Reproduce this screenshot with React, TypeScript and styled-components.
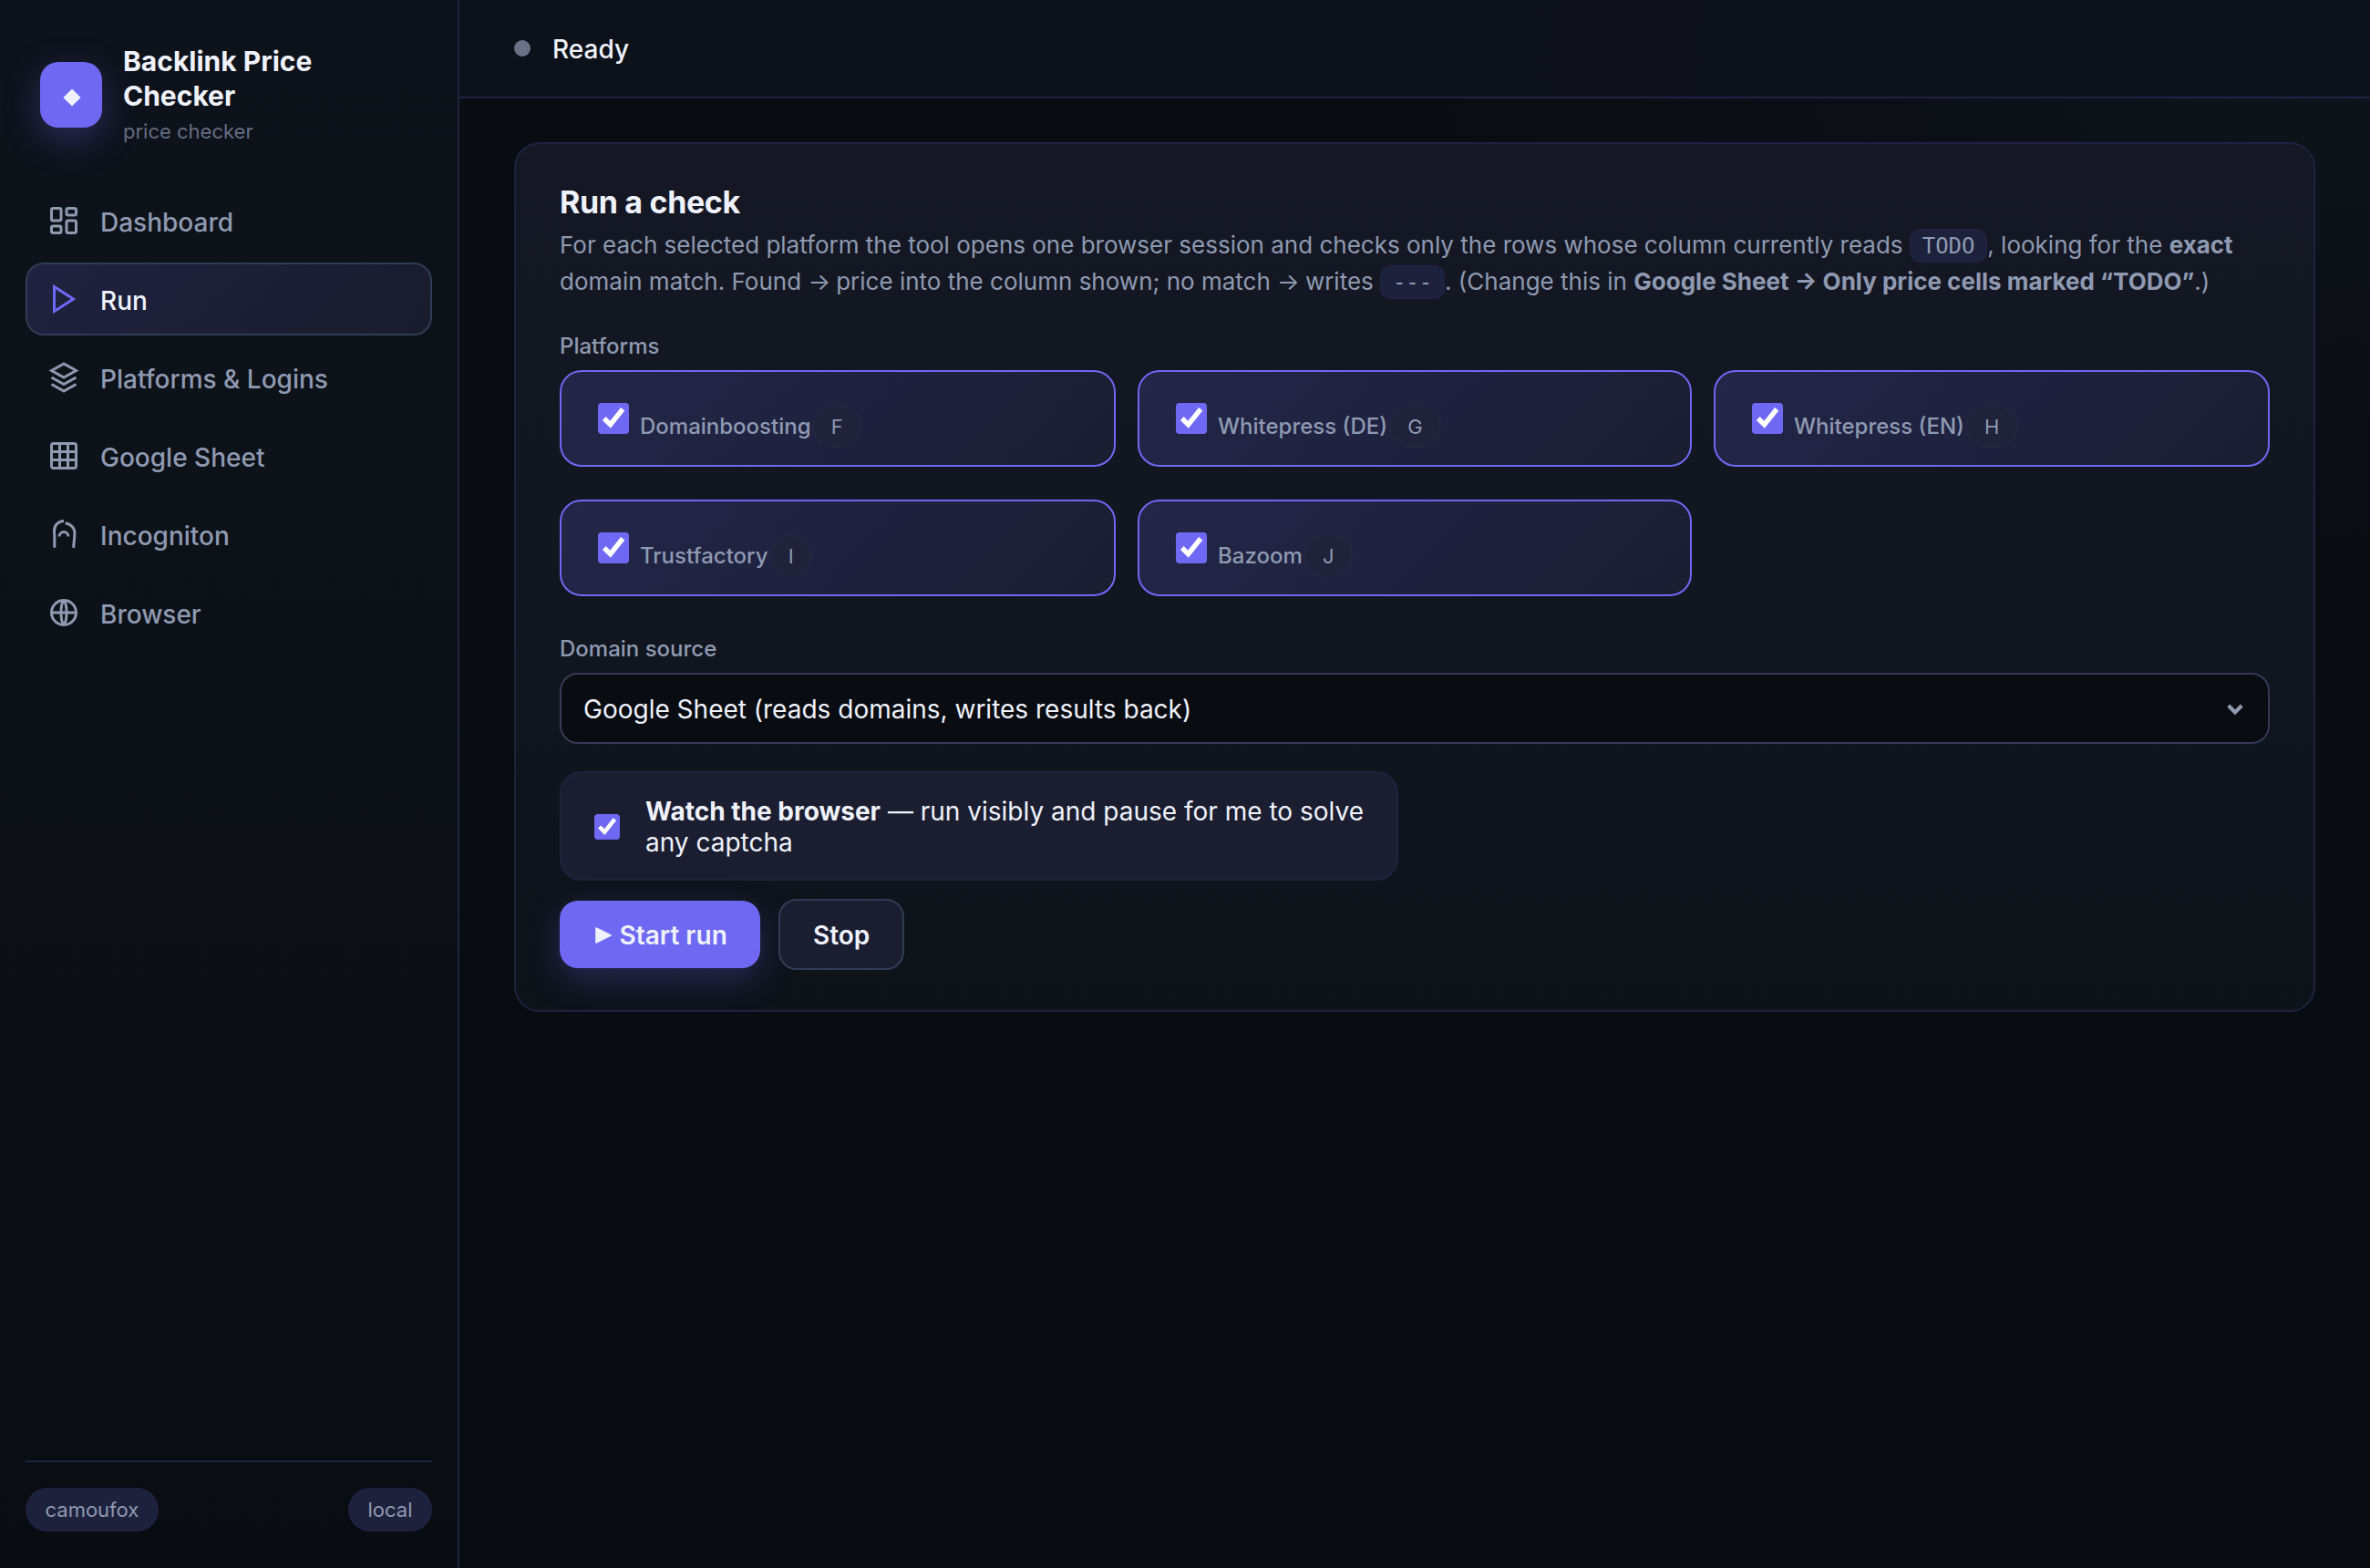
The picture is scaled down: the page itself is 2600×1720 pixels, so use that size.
import React from "react";
import type { ReactNode } from "react";
import styled, { createGlobalStyle, css } from "styled-components";

const color = {
  bg: "#090c11",
  text: "#eff2fb",
  muted: "#8f9ab2",
  dim: "#666d84",
  accent: "#6f68f3",
  line: "#1f2240",
  lineStrong: "#353b56",
  raised: "#1b1e30",
};

const Global = createGlobalStyle`
  *, *::before, *::after { box-sizing: border-box; }
  body {
    margin: 0;
    background: ${color.bg};
    color: ${color.text};
    font-family: Inter, "Liberation Sans", sans-serif;
    font-size: 28px;
    -webkit-font-smoothing: antialiased;
  }
`;

const Shell = styled.div`
  display: grid;
  grid-template-columns: 504px 1fr;
  height: 1720px;
  overflow: hidden;
  background:
    radial-gradient(ellipse 1000px 540px at 98% 4%, rgba(110, 140, 190, 0.055), transparent 100%),
    ${color.bg};
`;

const Sidebar = styled.aside`
  display: flex;
  flex-direction: column;
  padding: 48px 28px 40px;
  border-right: 2px solid ${color.line};
  background: linear-gradient(180deg, #0e121a 0%, #0d1118 35%, #090c11 100%);
`;

const Brand = styled.div`
  display: flex;
  align-items: center;
  gap: 23px;
  height: 112px;
  padding-left: 16px;
  margin-bottom: 42px;
`;

const Logo = styled.div`
  display: grid;
  place-items: center;
  flex: none;
  width: 68px;
  height: 72px;
  padding: 5px 0 0 1px;
  border-radius: 20px;
  background: ${color.accent};
  box-shadow: 0 12px 40px rgba(111, 104, 243, 0.33);
`;

const BrandName = styled.div`
  width: 260px;
  font-size: 30px;
  font-weight: 700;
  line-height: 38px;
`;

const BrandSub = styled.div`
  margin-top: 4px;
  font-size: 22px;
  line-height: 32px;
  color: ${color.dim};
`;

const BrandText = styled.div`
  padding-bottom: 1px;
`;

const Nav = styled.nav`
  display: flex;
  flex-direction: column;
  gap: 6px;
`;

const NavItem = styled.a<{ $active?: boolean }>`
  display: flex;
  align-items: center;
  gap: 22px;
  height: 80px;
  padding: 0 22px;
  border: 2px solid transparent;
  border-radius: 20px;
  font-weight: 500;
  color: ${color.muted};
  svg { flex: none; }
  ${(p) =>
    p.$active &&
    css`
      color: ${color.text};
      border-color: ${color.lineStrong};
      background: linear-gradient(135deg, #202240 0%, #1c1f35 50%, #191c2b 100%);
      svg { color: ${color.accent}; }
    `}
`;

const NavLabel = styled.span`
  padding-top: 3px;
`;

const SideFooter = styled.div`
  display: flex;
  justify-content: space-between;
  margin-top: auto;
  padding-top: 28px;
  border-top: 2px solid ${color.line};
`;

const Pill = styled.span<{ $quiet?: boolean }>`
  flex: none;
  height: 48px;
  padding: 6px 19.5px;
  border: 2px solid ${color.line};
  border-radius: 24px;
  background: #1e213b;
  font-size: 22px;
  font-weight: 400;
  line-height: 32px;
  color: ${color.muted};
  ${(p) =>
    p.$quiet &&
    css`
      height: 47px;
      padding: 6px 18.7px;
      margin-left: 1.5px;
      border-color: #24273f;
      background: #1f2239;
    `}
`;

const Main = styled.main`
  display: flex;
  flex-direction: column;
  min-width: 0;
`;

const Topbar = styled.header`
  display: flex;
  align-items: center;
  gap: 24px;
  height: 108px;
  padding: 0 60px;
  border-bottom: 2px solid ${color.line};
  background: rgba(15, 19, 27, 0.8);
  font-weight: 500;
`;

const StatusDot = styled.span`
  width: 18px;
  height: 18px;
  border-radius: 50%;
  background: #6a7187;
`;

const StatusText = styled.span`
  padding-top: 2px;
`;

const Content = styled.div`
  padding: 48px 60px;
`;

const Card = styled.section`
  height: 954px;
  padding: 43px 48px 44px;
  border: 2px solid ${color.line};
  border-radius: 28px;
  background: linear-gradient(180deg, #151824 0%, #121620 50%, #0e1219 100%);
`;

const Title = styled.h2`
  margin: 0 0 6px;
  font-size: 34px;
  font-weight: 700;
  line-height: 42px;
  letter-spacing: -0.01em;
`;

const Intro = styled.p`
  margin: 0 0 33px;
  height: 80px;
  font-size: 26px;
  line-height: 40px;
  color: ${color.muted};
  b { font-weight: 700; }
`;

const Arrow = styled.span`
  letter-spacing: -1.35px;
`;

const Code = styled.code`
  padding: 3px 11.8px 2px;
  border: 2px solid ${color.line};
  border-radius: 12px;
  background: #1e213c;
  font-family: "DejaVu Sans Mono", "Liberation Mono", monospace;
  font-size: 24px;
  line-height: 1;
`;

const FieldLabel = styled.div`
  margin-bottom: 9px;
  font-size: 24px;
  font-weight: 500;
  line-height: 35px;
  color: ${color.muted};
`;

const PlatformGrid = styled.div`
  display: grid;
  grid-template-columns: 610fr 608fr 610fr;
  gap: 36px 24px;
  margin-bottom: 40px;
`;

const PlatformCard = styled.label`
  display: flex;
  align-items: flex-start;
  height: 106px;
  padding: 34px 32px 0 40px;
  border: 2px solid ${color.accent};
  border-radius: 24px;
  background: linear-gradient(135deg, #242648 0%, #1f2240 45%, #1b1e30 100%);
  font-size: 24px;
  font-weight: 500;
  color: ${color.muted};
`;

const PlatformText = styled.span`
  display: flex;
  align-items: baseline;
  margin: 2px 0 0 12px;
  line-height: 32px;
`;

const Check = styled.input<{ $size: number }>`
  zoom: 2;
  flex: none;
  width: ${(p) => p.$size}px;
  height: ${(p) => p.$size}px;
  margin: 0;
  accent-color: ${color.accent};
`;

const Select = styled.div`
  display: flex;
  align-items: center;
  justify-content: space-between;
  height: 78px;
  padding: 2px 26px 0 24px;
  margin-bottom: 30px;
  border: 2px solid ${color.lineStrong};
  border-radius: 20px;
  background: ${color.bg};
`;

const WatchBox = styled.label`
  display: flex;
  align-items: center;
  gap: 28px;
  width: 920px;
  height: 120px;
  padding: 2px 30px 0 36px;
  margin-bottom: 20px;
  border: 2px solid #202340;
  border-radius: 24px;
  background: ${color.raised};
  line-height: 34px;
  b { font-weight: 700; }
`;

const Actions = styled.div`
  display: flex;
  align-items: center;
  gap: 20px;
`;

const Button = styled.button<{ $primary?: boolean }>`
  display: flex;
  align-items: center;
  height: 78px;
  padding: 2px 36px 0;
  border: 2px solid ${color.lineStrong};
  border-radius: 20px;
  background: ${color.raised};
  color: ${color.text};
  font: inherit;
  font-weight: 600;
  ${(p) =>
    p.$primary &&
    css`
      gap: 8.5px;
      width: 220px;
      height: 74px;
      padding: 2px 0 0 39px;
      border: 0;
      background: ${color.accent};
      box-shadow: 0 12px 36px rgba(111, 104, 243, 0.27);
    `}
`;

const Icon = ({ children }: { children: ReactNode }) => (
  <svg width="36" height="36" viewBox="0 0 24 24" fill="none" stroke="currentColor" strokeWidth="2">
    {children}
  </svg>
);

const navItems: { label: string; icon: ReactNode; active?: boolean }[] = [
  {
    label: "Dashboard",
    icon: (
      <>
        <rect x="3" y="3" width="7" height="9" rx="1.2" />
        <rect x="14" y="3" width="7" height="5" rx="1.2" />
        <rect x="14" y="12" width="7" height="9" rx="1.2" />
        <rect x="3" y="16" width="7" height="5" rx="1.2" />
      </>
    ),
  },
  { label: "Run", icon: <path d="M5 3l14 9-14 9z" />, active: true },
  {
    label: "Platforms & Logins",
    icon: <path d="M12 2 3 7l9 5 9-5zM3 12l9 5 9-5M3 17l9 5 9-5" />,
  },
  {
    label: "Google Sheet",
    icon: (
      <>
        <rect x="3" y="3" width="18" height="18" rx="1.6" />
        <path d="M3 9h18M3 15h18M9 3v18M15 3v18" />
      </>
    ),
  },
  {
    label: "Incogniton",
    icon: (
      <path d="M12 2.3a7 7 0 0 0-7 7c0 1.8.2 3 .2 4.6v8M13.1 4a7.2 7.2 0 0 1 6.8 7.6c0 3.4-.6 6.4-.8 10.3M8.7 13.7a3.3 3.3 0 0 1 6.6 0" />
    ),
  },
  {
    label: "Browser",
    icon: (
      <>
        <circle cx="12" cy="12" r="9" />
        <path d="M3 12h18M12 3c2.7 3 2.7 15 0 18M12 3c-2.7 3-2.7 15 0 18" />
      </>
    ),
  },
];

const platforms = [
  ["Domainboosting", "F"],
  ["Whitepress (DE)", "G"],
  ["Whitepress (EN)", "H"],
  ["Trustfactory", "I"],
  ["Bazoom", "J"],
];

export default function App() {
  return (
    <>
      <Global />
      <Shell>
        <Sidebar>
          <Brand>
            <Logo>
              <svg width="20" height="20" viewBox="0 0 20 20">
                <path d="M10 .4 19.6 10 10 19.6.4 10z" fill={color.text} />
              </svg>
            </Logo>
            <BrandText>
              <BrandName>Backlink Price Checker</BrandName>
              <BrandSub>price checker</BrandSub>
            </BrandText>
          </Brand>
          <Nav>
            {navItems.map((item) => (
              <NavItem key={item.label} $active={item.active}>
                <Icon>{item.icon}</Icon>
                <NavLabel>{item.label}</NavLabel>
              </NavItem>
            ))}
          </Nav>
          <SideFooter>
            <Pill>camoufox</Pill>
            <Pill>local</Pill>
          </SideFooter>
        </Sidebar>
        <Main>
          <Topbar>
            <StatusDot />
            <StatusText>Ready</StatusText>
          </Topbar>
          <Content>
            <Card>
              <Title>Run a check</Title>
              <Intro>
                For each selected platform the tool opens one browser session and checks only the rows whose column
                currently reads <Code>TODO</Code>, looking for the <b>exact</b> domain match. Found <Arrow>→</Arrow>{" "}
                price into the column shown; no match <Arrow>→</Arrow> writes <Code>---</Code>. (Change this in{" "}
                <b>Google Sheet → Only price cells marked “TODO”</b>.)
              </Intro>
              <FieldLabel>Platforms</FieldLabel>
              <PlatformGrid>
                {platforms.map(([name, column]) => (
                  <PlatformCard key={name}>
                    <Check type="checkbox" defaultChecked $size={17} />
                    <PlatformText>
                      {name}
                      <Pill $quiet>{column}</Pill>
                    </PlatformText>
                  </PlatformCard>
                ))}
              </PlatformGrid>
              <FieldLabel>Domain source</FieldLabel>
              <Select>
                Google Sheet (reads domains, writes results back)
                <svg width="20" height="14" viewBox="0 0 20 14" fill="none" stroke={color.muted} strokeWidth="4.2">
                  <path d="M2.7 3 10 10.2 17.3 3" />
                </svg>
              </Select>
              <WatchBox>
                <Check type="checkbox" defaultChecked $size={14} />
                <span>
                  <b>Watch the browser</b> — run visibly and pause for me to solve any captcha
                </span>
              </WatchBox>
              <Actions>
                <Button $primary>
                  <svg width="18" height="18" viewBox="0 0 18 18">
                    <path
                      d="M1 1 17 9 1 17z"
                      fill={color.text}
                      stroke={color.text}
                      strokeWidth="1.6"
                      strokeLinejoin="round"
                    />
                  </svg>
                  Start run
                </Button>
                <Button>Stop</Button>
              </Actions>
            </Card>
          </Content>
        </Main>
      </Shell>
    </>
  );
}
